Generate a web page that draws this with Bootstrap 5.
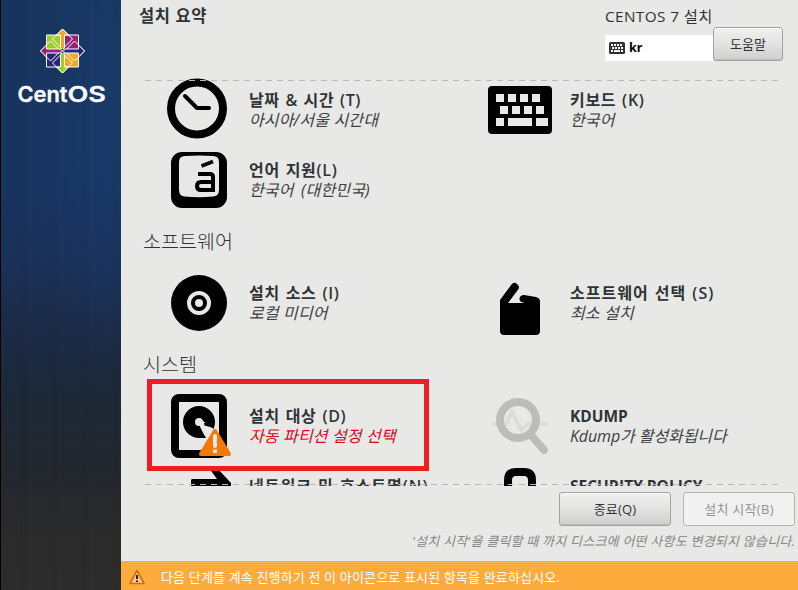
<!DOCTYPE html>
<html lang="ko">
<head>
<meta charset="utf-8">
<meta name="viewport" content="width=device-width, initial-scale=1">
<title>CentOS 7 설치</title>
<link rel="stylesheet" href="https://cdn.jsdelivr.net/npm/bootstrap@5.3.0/dist/css/bootstrap.min.css">
<style>
body{width:798px;height:590px;background:#e8e8e6;color:#2e3436;font-family:"Open Sans","Noto Sans CJK KR",sans-serif;font-size:16px;line-height:20px}
.side{width:121px;border-left:1px solid #000;padding-top:28px;background:
 repeating-linear-gradient(90deg,rgba(0,0,0,0) 0 17px,rgba(0,0,0,.02) 20px 24px,rgba(255,255,255,.008) 29px 31px),
 radial-gradient(ellipse 100px 280px at 120px 90px,rgba(27,66,120,.5),transparent),
 linear-gradient(180deg,#17345c 0,#17345f 190px,#1a3057 263px,#1b2a44 338px,#1c2836 400px,#22272e 470px,#2a2a2b 530px,#2c2c2c 590px)}
.top-row{height:75px;padding:0 15px 0 18px}
.page-title{font-weight:600;font-size:16.5px;padding-top:6px;letter-spacing:.6px}
.product{font-size:15.3px;padding-top:6px;height:35px;white-space:nowrap;letter-spacing:.4px;width:108px}
.layout-box{background:#fff;width:108px;height:26px;padding-left:4px;gap:4px;font:700 12.5px/26px "Noto Sans",sans-serif;color:#000}
.btn-gtk{border:1px solid #a2a29f;border-radius:3px;padding:0;height:34px;line-height:30px;font-size:13px;color:#2e3436;background:linear-gradient(#f0f0ef,#e4e4e2 45%,#cfcfcd);box-shadow:inset 0 1px #fff,inset 0 -1px #bdbdbb}
.btn-gtk:disabled{background:#f1f1f1;border-color:#b4b4b1;color:#92938f;opacity:1;box-shadow:none;letter-spacing:.3px}
.help{width:70px;margin-top:27px}
.act{width:112px;letter-spacing:.2px}
.spokes{height:411px;padding-left:22px}
.spokes::before,.spokes::after{content:"";position:absolute;left:24px;width:633px;height:1px;background:repeating-linear-gradient(90deg,#b9b9b6 0 6px,transparent 6px 11px);z-index:2}
.spokes::before{top:5px}
.spokes::after{bottom:1px}
.spoke{width:321px;height:70px;padding-left:24px;gap:18px;white-space:nowrap}
.spoke svg{width:64px;height:64px;flex:none;overflow:visible}
.spoke-name{font-weight:600;font-size:16px;letter-spacing:.7px;word-spacing:1px}
.spoke-name.snug{letter-spacing:.6px}
.spoke-name.airy{letter-spacing:1px}
.spoke-name.latin{font-size:15.5px;letter-spacing:0;font-weight:700;word-spacing:0}
.spoke-state{font-style:italic;letter-spacing:.15px;color:#3c4143}
.lang-state{word-spacing:3px}
.kdump-state{letter-spacing:-.1px}
.warn-text{color:#cc0f1c}
.section-name{height:53px;line-height:54px;font-size:19.6px;font-weight:300;margin:0}
.marked{position:absolute;left:26px;top:304px;width:282px;height:92px;border:5px solid #ee1c25;z-index:3}
.actions{height:75px;padding:6px 3px 0 0}
.note{font-size:13px;font-style:italic;color:#858683;line-height:30px;white-space:nowrap;letter-spacing:.22px}
.info{height:29px;background:#fbac3d;color:#fff;font-size:13px;padding:2px 0 0 8px;gap:16px;white-space:nowrap;letter-spacing:.16px}
</style>
<script src="https://cdn.jsdelivr.net/npm/bootstrap@5.3.0/dist/js/bootstrap.bundle.min.js"></script>
</head>
<body class="d-flex overflow-hidden m-0">
<aside class="side flex-shrink-0">
 <svg class="d-block" width="120" height="80" viewBox="0 0 120 80">
  <g transform="translate(61.5 23)" stroke="#fff" stroke-width="1">
   <path fill="#9ccd2a" d="M-16-16H-1V-1H-16z"/><path fill="#932279" d="M1-16H16V-1H1z"/>
   <path fill="#262577" d="M-16 1H-1V16H-16z"/><path fill="#efa724" d="M1 1H16V16H1z"/>
   <path fill="none" d="M0-22 10-12 0-2-10-12zM0 22 10 12 0 2-10 12zM-22 0-12-10-2 0-12 10zM22 0 12-10 2 0 12 10z"/>
   <path fill="#efa724" d="M0-22 6-16H2V-3L0-1-2-3V-16H-6z"/>
   <path fill="#262577" d="M22 0 16-6V-2H3L1 0 3 2H16V6z"/>
   <path fill="#9ccd2a" d="M0 22 6 16H2V3L0 1-2 3V16H-6z"/>
   <path fill="#932279" d="M-22 0-16-6V-2H-3L-1 0-3 2H-16V6z"/>
   <path fill="#17345c" stroke="none" d="M-2-2H2V2H-2z"/><path d="M-2-2 2 2M2-2-2 2"/>
  </g>
  <g fill="#fff" stroke="#fff" stroke-width=".3" font-family="Inter,sans-serif" font-weight="600" font-size="21.5">
   <text y="73.500"><tspan x="16.500" textLength="16" lengthAdjust="spacingAndGlyphs">C</tspan><tspan x="32.500" textLength="34" lengthAdjust="spacingAndGlyphs">ent</tspan><tspan x="66.500" textLength="38.500" lengthAdjust="spacingAndGlyphs">OS</tspan></text>
  </g>
 </svg>
</aside>
<main class="d-flex flex-column flex-grow-1">
 <header class="top-row d-flex">
  <h1 class="page-title m-0 flex-grow-1">설치 요약</h1>
  <div><div class="product">CENTOS 7 설치</div>
   <div class="layout-box d-flex align-items-center">
    <svg width="16" height="12" viewBox="0 0 16 12"><rect width="16" height="12" rx="1.5" fill="#2e3436"/><path fill="#fff" d="M2 2h2v2H2zM5 2h2v2H5zM8 2h2v2H8zM11 2h2v2h-2zM3 5h2v2H3zM6 5h2v2H6zM9 5h2v2H9zM12 5h2v2h-2zM2 8h2v2H2zM5 8h6v2H5zM12 8h2v2h-2z"/></svg>
    <span>kr</span></div></div>
  <button class="btn btn-gtk help">도움말</button>
 </header>

 <section class="spokes position-relative overflow-hidden flex-shrink-0">
  <div class="d-flex">
   <div class="spoke d-flex align-items-center">
    <svg viewBox="0 0 64 64"><circle cx="30" cy="30.5" r="26" fill="none" stroke="#000" stroke-width="8"/><path d="M18 18 30 30H42" fill="none" stroke="#000" stroke-width="4" stroke-linecap="round" stroke-linejoin="round"/></svg>
    <div><div class="spoke-name snug">날짜 &amp; 시간 (T)</div><div class="spoke-state">아시아/서울 시간대</div></div>
   </div>
   <div class="spoke d-flex align-items-center">
    <svg viewBox="0 0 64 64"><rect y="8" width="64" height="48" rx="4"/><path fill="#e8e8e6" d="M8 16h8v8H8zM20 16h8v8h-8zM32 16h8v8h-8zM44 16h8v8h-8zM12 28h8v8h-8zM24 28h8v8h-8zM36 28h8v8h-8zM48 28h8v8h-8zM8 40h8v8H8zM20 40h24v8H20zM48 40h12v8H48z"/></svg>
    <div><div class="spoke-name">키보드 (K)</div><div class="spoke-state">한국어</div></div>
   </div>
  </div>
  <div class="spoke d-flex align-items-center">
   <svg viewBox="0 0 64 64"><rect x="4" y="4" width="56" height="56" rx="11"/><path fill="#e8e8e6" d="M18 8Q32 7 46 8 52 8 52 14V42Q52 48 46 48.500Q32 50 18 48.500 12 48 12 42V14Q12 8 18 8z"/><path d="M34.500 18 46 13.500" stroke="#000" stroke-width="3.500"/><path d="M31 26H43Q46 26 46 29V42H34Q30 42 30 38T34 34H46" fill="none" stroke="#000" stroke-width="4"/></svg>
   <div><div class="spoke-name">언어 지원(L)</div><div class="spoke-state lang-state">한국어 (대한민국)</div></div>
  </div>
  <h2 class="section-name">소프트웨어</h2>
  <div class="d-flex">
   <div class="spoke d-flex align-items-center">
    <svg viewBox="0 0 64 64"><circle cx="32" cy="32" r="28"/><circle cx="32" cy="32" r="10" fill="none" stroke="#e8e8e6" stroke-width="4"/><circle cx="32" cy="32" r="4" fill="#e8e8e6"/></svg>
    <div><div class="spoke-name">설치 소스 (I)</div><div class="spoke-state">로컬 미디어</div></div>
   </div>
   <div class="spoke d-flex align-items-center">
    <svg viewBox="0 0 64 64"><path d="M12 29 23.500 13.500Q26 10.500 29 13T30.500 18L20 32H36.500Q31 31 31.500 27.500T36 24L48 26Q52 27 52 30V60Q52 64 48 64H16Q12 64 12 60z"/></svg>
    <div><div class="spoke-name airy">소프트웨어 선택 (S)</div><div class="spoke-state">최소 설치</div></div>
   </div>
  </div>
  <h2 class="section-name">시스템</h2>
  <div class="d-flex">
   <div class="spoke d-flex align-items-center">
    <svg viewBox="0 0 64 64"><rect x="8" y="4" width="48" height="56" rx="4" fill="#e8e8e6" stroke="#000" stroke-width="8"/><circle cx="32" cy="28" r="16"/><path d="M31 28 38 44 37 50H48V36L36 27z" fill="#e8e8e6"/><path d="M34 44 32.500 33 39 44z"/><path d="M37.500 31.500 47 34 46 28 37 29z"/><circle cx="32" cy="28" r="4" fill="#e8e8e6"/><path fill="#f57900" stroke="#f57900" stroke-width="4" stroke-linejoin="round" d="M48 37 62 60H34z"/><path d="M48 42V52" stroke="#e8e8e6" stroke-width="4" stroke-linecap="round"/><path d="M48 55.500V59" stroke="#e8e8e6" stroke-width="4"/></svg>
    <div><div class="spoke-name">설치 대상 (D)</div><div class="spoke-state warn-text">자동 파티션 설정 선택</div></div>
   </div>
   <div class="spoke d-flex align-items-center">
    <svg viewBox="0 0 64 64"><path d="M4 30H18L24 18 33 36 40 30H60" fill="none" stroke="#dcdcda" stroke-width="4"/><circle cx="30" cy="26" r="18" fill="none" stroke="#bcbcbb" stroke-width="8"/><path d="M43 41 56 56" stroke="#bcbcbb" stroke-width="8" stroke-linecap="round"/></svg>
    <div><div class="spoke-name latin">KDUMP</div><div class="spoke-state kdump-state">Kdump가 활성화됩니다</div></div>
   </div>
  </div>
  <div class="d-flex">
   <div class="spoke d-flex align-items-center">
    <svg viewBox="0 0 64 64"><path d="M42 4H50L64 19V24H24V16Q24 15 26 15H50z"/></svg>
    <div><div class="spoke-name airy">네트워크 및 호스트명(N)</div><div class="spoke-state">&nbsp;</div></div>
   </div>
   <div class="spoke d-flex align-items-center">
    <svg viewBox="0 0 64 64"><path d="M20 32V16Q20 8 28 8H36Q44 8 44 16V32" fill="none" stroke="#000" stroke-width="8"/><rect x="10" y="28" width="44" height="32" rx="4"/></svg>
    <div><div class="spoke-name latin">SECURITY POLICY</div><div class="spoke-state">&nbsp;</div></div>
   </div>
  </div>
  <div class="marked"></div>
 </section>

 <footer>
  <div class="actions">
   <div class="d-flex justify-content-end" style="gap:12px"><button class="btn btn-gtk act">종료(Q)</button><button class="btn btn-gtk act" disabled>설치 시작(B)</button></div>
   <div class="note text-end">'설치 시작'을 클릭할 때 까지 디스크에 어떤 사항도 변경되지 않습니다.</div>
  </div>
  <div class="info d-flex align-items-center">
   <svg width="16" height="16" viewBox="0 0 16 16"><path d="M8 1.500 15 14.500H1z" fill="#f7c98f" stroke="#d9690f" stroke-width="1.600" stroke-linejoin="round"/><path d="M8 6V10M8 11.500V13" stroke="#222" stroke-width="2"/></svg>
   <span>다음 단계를 계속 진행하기 전 이 아이콘으로 표시된 항목을 완료하십시오.</span>
  </div>
 </footer>
</main>
</body>
</html>
